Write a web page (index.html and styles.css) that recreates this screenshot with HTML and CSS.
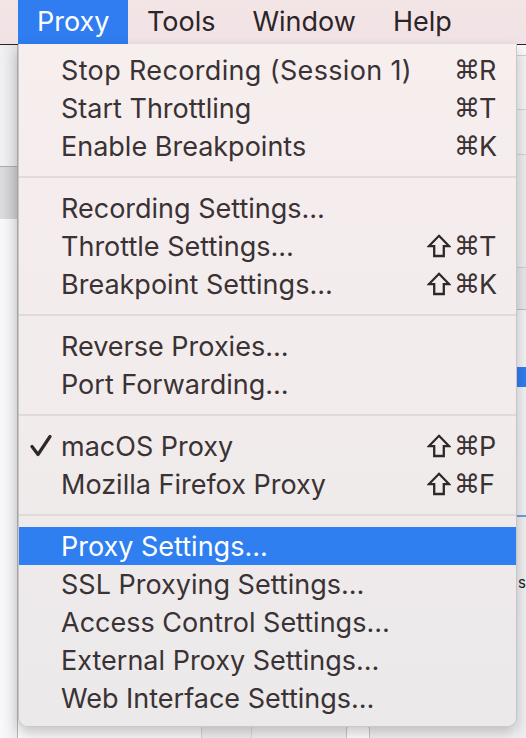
FILE: index.html
```html
<!DOCTYPE html>
<html>
<head>
<meta charset="utf-8">
<link rel="stylesheet" href="styles.css">
</head>
<body>
<div class="screen">
  <header class="menubar">
    <span class="mb-gap"></span>
    <span class="mb-item active">Proxy</span>
    <span class="mb-item">Tools</span>
    <span class="mb-item">Window</span>
    <span class="mb-item">Help</span>
  </header>
  <div class="backdrop">
    <div class="strip strip-left">
      <div class="lb lb1"></div>
      <div class="lb lb2"></div>
      <div class="lb lb3"></div>
    </div>
    <div class="middle">
      <div class="mid-fill"></div>
      <div class="mid-bottom">
        <div class="mb-a"></div>
        <div class="mb-b"></div>
        <div class="mb-c"><span class="knob"></span></div>
      </div>
    </div>
    <div class="strip strip-right">
      <div class="rb rb1"></div>
      <div class="rb rb2"></div>
      <div class="rb rb3"></div>
      <div class="rb rb4"></div>
      <div class="rb rb5"></div>
      <div class="rb rb6"></div>
      <div class="rb rb7"></div>
      <div class="rb rb8"></div>
      <div class="rb rb9"><span class="peek">s</span></div>
    </div>
  </div>

  <div class="menu">
    <div class="row"><span class="gutter"></span><span class="label wide">Stop Recording (Session 1)</span><span class="keys"><span class="mod">⌘</span><span class="key">R</span></span></div>
    <div class="row"><span class="gutter"></span><span class="label">Start Throttling</span><span class="keys"><span class="mod">⌘</span><span class="key">T</span></span></div>
    <div class="row"><span class="gutter"></span><span class="label">Enable Breakpoints</span><span class="keys"><span class="mod">⌘</span><span class="key">K</span></span></div>
    <div class="sep"></div>
    <div class="row"><span class="gutter"></span><span class="label">Recording Settings…</span><span class="keys"></span></div>
    <div class="row"><span class="gutter"></span><span class="label">Throttle Settings…</span><span class="keys"><svg class="shift" width="24" height="24" viewBox="0 0 24 24"><path d="M12 1.8 L22.2 12.2 L16.8 12.2 L16.8 22 L7.2 22 L7.2 12.2 L1.8 12.2 Z" fill="none" stroke="#2f2829" stroke-width="2.3" stroke-linejoin="miter"/></svg><span class="mod">⌘</span><span class="key">T</span></span></div>
    <div class="row"><span class="gutter"></span><span class="label">Breakpoint Settings…</span><span class="keys"><svg class="shift" width="24" height="24" viewBox="0 0 24 24"><path d="M12 1.8 L22.2 12.2 L16.8 12.2 L16.8 22 L7.2 22 L7.2 12.2 L1.8 12.2 Z" fill="none" stroke="#2f2829" stroke-width="2.3" stroke-linejoin="miter"/></svg><span class="mod">⌘</span><span class="key">K</span></span></div>
    <div class="sep"></div>
    <div class="row"><span class="gutter"></span><span class="label">Reverse Proxies…</span><span class="keys"></span></div>
    <div class="row"><span class="gutter"></span><span class="label">Port Forwarding…</span><span class="keys"></span></div>
    <div class="sep"></div>
    <div class="row"><span class="gutter"><svg class="check" width="22" height="22" viewBox="0 0 22 22"><path d="M2 11.5 L8 19.5 L20 1.5" fill="none" stroke="#2f2829" stroke-width="3.2" stroke-linecap="round" stroke-linejoin="round"/></svg></span><span class="label">macOS Proxy</span><span class="keys"><svg class="shift" width="24" height="24" viewBox="0 0 24 24"><path d="M12 1.8 L22.2 12.2 L16.8 12.2 L16.8 22 L7.2 22 L7.2 12.2 L1.8 12.2 Z" fill="none" stroke="#2f2829" stroke-width="2.3" stroke-linejoin="miter"/></svg><span class="mod">⌘</span><span class="key">P</span></span></div>
    <div class="row"><span class="gutter"></span><span class="label">Mozilla Firefox Proxy</span><span class="keys"><svg class="shift" width="24" height="24" viewBox="0 0 24 24"><path d="M12 1.8 L22.2 12.2 L16.8 12.2 L16.8 22 L7.2 22 L7.2 12.2 L1.8 12.2 Z" fill="none" stroke="#2f2829" stroke-width="2.3" stroke-linejoin="miter"/></svg><span class="mod">⌘</span><span class="key">F</span></span></div>
    <div class="sep"></div>
    <div class="row selected"><span class="gutter"></span><span class="label">Proxy Settings…</span><span class="keys"></span></div>
    <div class="row"><span class="gutter"></span><span class="label">SSL Proxying Settings…</span><span class="keys"></span></div>
    <div class="row"><span class="gutter"></span><span class="label">Access Control Settings…</span><span class="keys"></span></div>
    <div class="row"><span class="gutter"></span><span class="label">External Proxy Settings…</span><span class="keys"></span></div>
    <div class="row"><span class="gutter"></span><span class="label">Web Interface Settings…</span><span class="keys"></span></div>
  </div>
</div>
</body>
</html>
```

FILE: styles.css
```css
* { box-sizing: border-box; }
html, body { margin: 0; padding: 0; }
body {
  width: 526px;
  height: 738px;
  overflow: hidden;
  font-family: "Inter", "Liberation Sans", sans-serif;
  background: #f6f6f8;
}
.screen {
  position: relative;
  width: 526px;
  height: 738px;
  display: flex;
  flex-direction: column;
}

/* menu bar */
.menubar {
  height: 44px;
  flex: 0 0 44px;
  display: flex;
  align-items: stretch;
  background: linear-gradient(#f3e4e6, #f1e3e5);
  font-size: 27px;
  color: #2c2426;
}
.mb-gap { width: 18px; }
.mb-item {
  padding: 0 18.5px;
  line-height: 44px;
}
.mb-item.active {
  background: #2f7df0;
  color: #ffffff;
  padding: 0 19px;
}

/* backdrop window */
.backdrop {
  flex: 1;
  display: flex;
  border-top: 1px solid #262626;
}
.strip { display: flex; flex-direction: column; }
.strip-left {
  width: 18px;
  border-right: 1px solid #b9b7ba;
}
.lb1 { height: 122px; background: linear-gradient(90deg, #f1f1f3, #e4e3e6); border-bottom: 1px solid #a9a8ab; }
.lb2 { height: 52px; background: linear-gradient(90deg, #dcdbde, #c9c8cc); }
.lb3 { flex: 1; background: linear-gradient(90deg, #f9f9fb, #ededf0); }

.middle { flex: 1; display: flex; flex-direction: column; }
.mid-fill { flex: 1; background: #f4f4f6; }
.mid-bottom { height: 14px; display: flex; }
.mb-a { width: 184px; background: #fbfbfc; border-right: 1px solid #d6d6d8; }
.mb-b { width: 50px; background: #f1f1f2; border-right: 1px solid #dcdcde; }
.mb-c { flex: 1; background: #f3f3f4; padding-left: 94px; }
.knob { display: block; width: 24px; height: 14px; border: 1px solid #c9c9cc; border-bottom: none; border-radius: 6px 6px 0 0; background: #fff; }

.strip-right { width: 9px; }
.rb1 { height: 11px; background: #fafafa; border-bottom: 1px solid #cfcfd1; }
.rb2 { height: 54px; background: #f3f3f5; border-bottom: 1px solid #d2d2d4; }
.rb3 { height: 45px; background: #efeff1; border-bottom: 1px solid #d2d2d4; }
.rb4 { height: 113px; background: #ececee; border-bottom: 1px solid #cfcfd1; }
.rb5 { height: 42px; background: #e7e7e9; border-bottom: 1px solid #bdbdbf; }
.rb6 { height: 57px; background: #f2f2f4; }
.rb7 { height: 20px; background: #2f7df0; }
.rb8 { height: 130px; background: #f1f1f3; border-bottom: 2px solid #6d9ee8; }
.rb9 { flex: 1; background: #efeff1; padding-top: 54px; }
.peek { display: block; font-size: 15px; color: #222; margin-left: 1px; line-height: 24px; }

/* dropdown menu */
.menu {
  position: absolute;
  top: 44px;
  left: 18px;
  width: 499px;
  padding: 7px 0 9px;
  background: linear-gradient(#f7eeee 0%, #f3ecec 45%, #ebe9ea 100%);
  border: 1px solid rgba(0, 0, 0, 0.16);
  border-top: none;
  border-radius: 0 0 9px 9px;
  box-shadow: 0 6px 14px rgba(0, 0, 0, 0.22);
  font-size: 27px;
  color: #3a3234;
}
.row {
  height: 38px;
  display: grid;
  grid-template-columns: 42px 1fr auto;
  align-items: center;
  padding-right: 18px;
  white-space: nowrap;
}
.label.wide { letter-spacing: 0.35px; }
.row.selected {
  background: #2f7ff1;
  color: #ffffff;
}
.gutter {
  display: flex;
  align-items: center;
  padding-left: 11px;
}
.check { display: block; }
.keys {
  display: flex;
  align-items: center;
}
.shift { display: block; margin-right: 3px; }
.mod {
  font-family: "DejaVu Sans", sans-serif;
  font-size: 26px;
  width: 25px;
  text-align: center;
}
.key { width: 19px; text-align: left; }
.sep {
  height: 2px;
  margin: 11px 0;
  background: #e1d9da;
}
```
